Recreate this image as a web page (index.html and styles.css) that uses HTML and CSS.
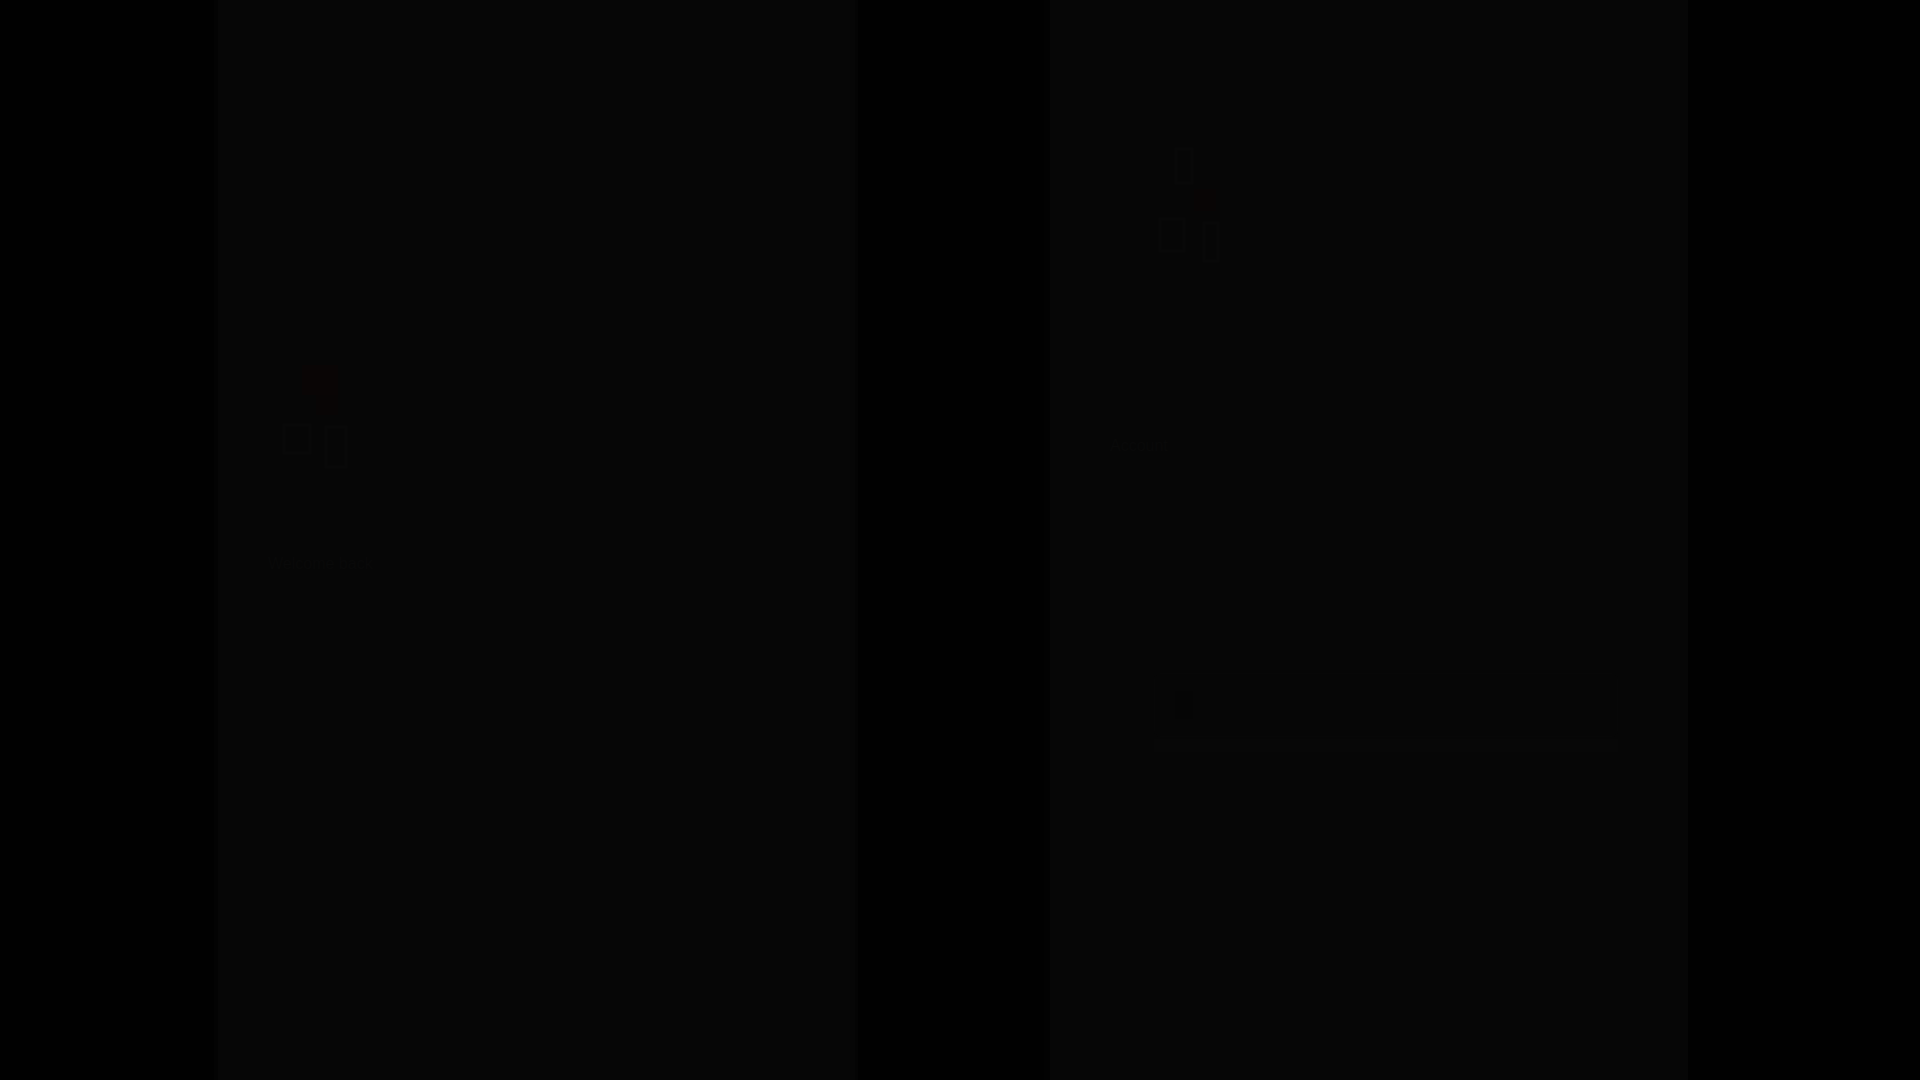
FILE: index.html
```html
<!DOCTYPE html>
<html lang="en">
<head>
    <meta charset="UTF-8">
    <meta name="viewport" content="width=device-width, initial-scale=1.0">
    <title>Document</title>
    <link rel="stylesheet" href="styles.css">
</head>
<body>
    <div class="stage">
        <div class="panel panel-left">
            <div class="feature">
                <svg class="feature-icon" width="80" height="105" viewBox="0 0 80 105">
                    <rect x="26" y="0" width="36" height="30" fill="#090505"/>
                    <rect x="40" y="30" width="22" height="20" fill="#080505"/>
                    <rect x="8" y="60" width="26" height="28" fill="none" stroke="#080808" stroke-width="3"/>
                    <rect x="50" y="62" width="20" height="40" fill="none" stroke="#080808" stroke-width="3"/>
                </svg>
                <p class="feature-text">Welcome back</p>
            </div>
            <div class="panel-body"></div>
        </div>
        <div class="panel panel-right">
            <div class="badge">
                <svg width="72" height="120" viewBox="0 0 72 120">
                    <rect x="20" y="4" width="16" height="34" fill="none" stroke="#080808" stroke-width="3"/>
                    <rect x="38" y="44" width="22" height="22" fill="#080505"/>
                    <rect x="4" y="74" width="24" height="32" fill="none" stroke="#080808" stroke-width="3"/>
                    <rect x="48" y="78" width="14" height="38" fill="none" stroke="#080808" stroke-width="3"/>
                </svg>
            </div>
            <p class="label">Account</p>
            <div class="field">
                <span class="field-mark"></span>
                <span class="field-fill"></span>
            </div>
            <div class="field-line"></div>
            <div class="panel-body"></div>
        </div>
    </div>
</body>
</html>
```

FILE: styles.css
```css
body {
    margin: 0;
    padding: 0;
    font-family: "Liberation Sans", Arial, Helvetica, sans-serif;
    background-color: #010101;
    color: #090909;
}
.stage {
    display: flex;
    gap: 186px;
    padding-left: 214px;
    height: 1080px;
    overflow: hidden;
}
.panel {
    width: 644px;
    height: 1080px;
    background-color: #060606;
    box-sizing: border-box;
    display: flex;
    flex-direction: column;
}
.panel-left {
    border-left: 4px solid #030303;
    border-right: 3px solid #040404;
    padding: 365px 40px 0 50px;
}
.feature {
    display: flex;
    flex-direction: column;
    gap: 40px;
}
.feature-icon {
    margin-left: 8px;
}
.feature-text {
    margin: 45px 0 0 0;
    font-size: 16px;
    color: #090909;
}
.panel-right {
    border-left: 6px solid #020202;
    padding: 145px 70px 0 60px;
}
.badge {
    margin-left: 46px;
    height: 120px;
}
.label {
    margin: 172px 0 0 0;
    font-size: 16px;
    color: #090909;
}
.field {
    display: flex;
    align-items: center;
    gap: 20px;
    margin-top: 218px;
    margin-left: 44px;
    height: 62px;
    padding: 0 20px;
    background-color: #060606;
    border: 1px solid #070707;
    border-radius: 6px;
}
.field-mark {
    width: 18px;
    height: 28px;
    background-color: #050505;
}
.field-fill {
    flex: 1;
    height: 22px;
    background-color: #060606;
}
.field-line {
    margin: 2px 0 0 44px;
    height: 13px;
    background-color: #070707;
}
.panel-body {
    flex: 1;
}
```
